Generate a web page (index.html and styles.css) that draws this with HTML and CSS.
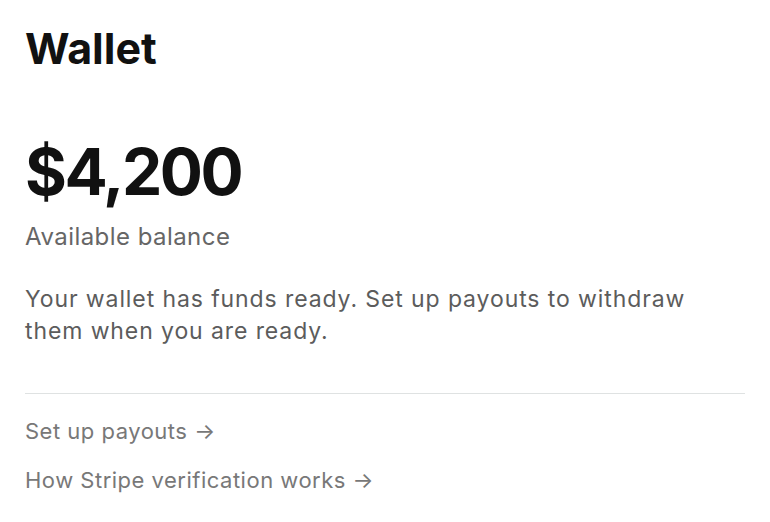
FILE: index.html
```html
<!DOCTYPE html>
<html lang="en">
<head>
<meta charset="utf-8">
<title>Wallet</title>
<link rel="stylesheet" href="styles.css">
</head>
<body>
<main class="wallet">
  <h1 class="title">Wallet</h1>
  <section class="balance">
    <div class="amount">$4,200</div>
    <div class="label">Available balance</div>
  </section>
  <p class="note">Your wallet has funds ready. Set up payouts to withdraw them when you are ready.</p>
  <hr class="divider">
  <nav class="links">
    <a class="link" href="#">Set up payouts →</a>
    <a class="link" href="#">How Stripe verification works →</a>
  </nav>
</main>
</body>
</html>
```

FILE: styles.css
```css
html, body {
  margin: 0;
  padding: 0;
  background: #ffffff;
}
body {
  font-family: Inter, "Noto Sans", sans-serif;
  color: #111111;
}
.wallet {
  padding: 22px 25px 0 25px;
  display: flex;
  flex-direction: column;
}
.title {
  margin: 0;
  font-size: 43px;
  font-weight: 700;
  letter-spacing: 0;
  line-height: 52px;
  color: #111111;
}
.balance {
  margin-top: 62px;
  display: flex;
  flex-direction: column;
}
.amount {
  font-size: 64px;
  font-weight: 700;
  letter-spacing: -2.5px;
  line-height: 72px;
  color: #111111;
}
.label {
  margin-top: 14px;
  font-size: 24px;
  line-height: 30px;
  letter-spacing: 0.45px;
  color: #666666;
}
.note {
  margin: 31px 0 0 0;
  font-size: 23px;
  line-height: 32px;
  letter-spacing: 0.9px;
  color: #5c5c5c;
  max-width: 710px;
}
.divider {
  margin: 46px 0 0 0;
  border: 0;
  border-top: 1px solid #dfe2e2;
  width: 720px;
}
.links {
  margin-top: 22px;
  display: flex;
  flex-direction: column;
  gap: 19px;
}
.link {
  font-size: 22px;
  line-height: 30px;
  letter-spacing: 0.5px;
  color: #787878;
  text-decoration: none;
}
```
